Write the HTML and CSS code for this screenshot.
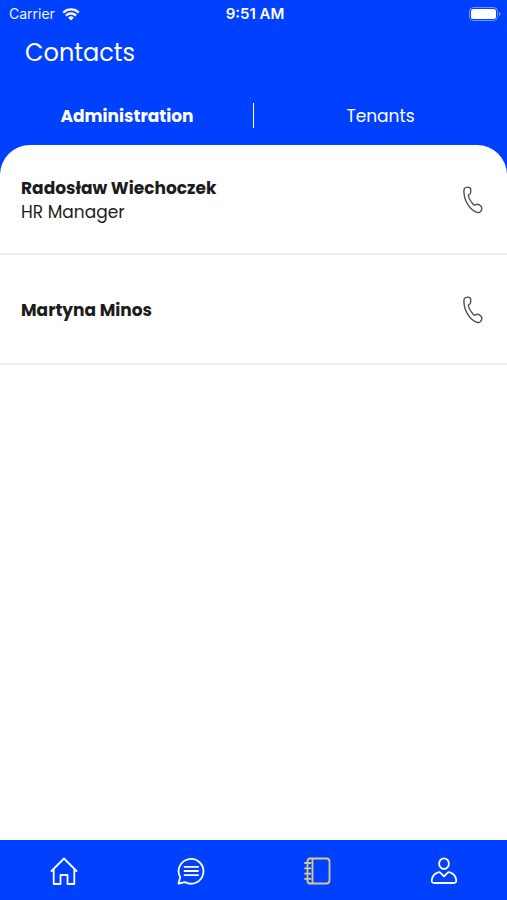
FILE: index.html
```html
<!DOCTYPE html>
<html lang="en">
<head>
<meta charset="utf-8">
<meta name="viewport" content="width=device-width, initial-scale=1">
<title>Contacts</title>
<link rel="stylesheet" href="styles.css">
</head>
<body>
<div class="app">
  <header class="header">
    <div class="status">
      <div class="status-left">
        <span>Carrier</span>
        <svg class="wifi" viewBox="0 0 18 13" width="18" height="13" aria-hidden="true">
          <path d="M1.200 4.600a11.200 11.200 0 0 1 15.600 0M3.900 7.600a7.300 7.300 0 0 1 10.200 0" fill="none" stroke="currentColor" stroke-width="2.300"/>
          <path d="M9 12.600 6.100 9.700a4.100 4.100 0 0 1 5.800 0z" fill="currentColor"/>
        </svg>
      </div>
      <time class="clock">9:51 AM</time>
      <svg class="battery" viewBox="0 0 32 14" width="32" height="14" aria-hidden="true">
        <rect x=".5" y=".5" width="28" height="13" rx="4" fill="none" stroke="#fff" stroke-opacity=".45"/>
        <rect x="2" y="2" width="25" height="10" rx="2.500" fill="#fff"/>
        <path d="M30 5v4q1.500-.6 1.500-2T30 5z" fill="#fff" fill-opacity=".5"/>
      </svg>
    </div>
    <h1 class="title">Contacts</h1>
    <nav class="tabs" aria-label="Contact groups">
      <button class="tab tab-active" type="button">Administration</button>
      <button class="tab" type="button">Tenants</button>
    </nav>
  </header>

  <main class="sheet">
    <ul class="contacts">
      <li class="contact">
        <div class="person">
          <h2 class="name">Radosław Wiechoczek</h2>
          <p class="role">HR Manager</p>
        </div>
        <button class="call" type="button" aria-label="Call Radosław Wiechoczek">
          <svg viewBox="0 0 20 28" width="20" height="28" aria-hidden="true"><path d="M1.200 3Q2 1.100 4.500 1.100q3 0 3.200 2.200l-.1 3.400q-.1 1.300-1.500 1.700-.8.300-.7 1.100.6 4.200 5.300 9.300.7.600 1.400.1 2.300-1.300 4.300-.1 2.200 1.400 2.500 3.400-.2 2.300-1.600 3.600-1.400 1.100-3.300.5C6.500 23.500 1.200 14.800.9 5.700Q.9 4.100 1.200 3z"/></svg>
        </button>
      </li>
      <li class="contact">
        <div class="person">
          <h2 class="name">Martyna Minos</h2>
        </div>
        <button class="call" type="button" aria-label="Call Martyna Minos">
          <svg viewBox="0 0 20 28" width="20" height="28" aria-hidden="true"><path d="M1.200 3Q2 1.100 4.500 1.100q3 0 3.200 2.200l-.1 3.400q-.1 1.300-1.500 1.700-.8.300-.7 1.100.6 4.200 5.300 9.300.7.600 1.400.1 2.300-1.300 4.300-.1 2.200 1.400 2.500 3.400-.2 2.300-1.600 3.600-1.400 1.100-3.300.5C6.500 23.500 1.200 14.800.9 5.700Q.9 4.100 1.200 3z"/></svg>
        </button>
      </li>
    </ul>
  </main>

  <nav class="tabbar" aria-label="Main">
    <a class="item" href="#home" aria-label="Home">
      <svg viewBox="0 0 28 28" width="28" height="28" aria-hidden="true"><path d="M1.500 14 14 1.500 26.500 14M3.700 12v15h6.800v-9h7v9h6.800V12"/></svg>
    </a>
    <a class="item" href="#messages" aria-label="Messages">
      <svg viewBox="0 0 28 28" width="28" height="28" aria-hidden="true"><path d="M1.500 26.500 3.200 20.300A12.400 12.400 0 1 1 8 25.100zM7.500 9.800h13.600M7.500 14h13.600M7.500 18.200h13.600"/></svg>
    </a>
    <a class="item item-active" href="#contacts" aria-label="Contacts" aria-current="page">
      <svg viewBox="0 0 28 28" width="28" height="28" aria-hidden="true"><path d="M7 1.500H23.500q3 0 3 3v19q0 3-3 3H7q-2.500 0-2.500-3v-19q0-3 2.500-3zM9.500 1.500v25M2 6H7.500M2 11.300H7.500M2 16.600H7.500M2 21.900H7.500"/></svg>
    </a>
    <a class="item" href="#profile" aria-label="Profile">
      <svg viewBox="0 0 28 28" width="28" height="28" aria-hidden="true"><ellipse cx="14" cy="6.700" rx="4.900" ry="5.300"/><path d="M8.200 15.300q1.300-.5 2.300.6L14 19.400l3.500-3.500q1-1.100 2.300-.6 5.600 1.900 6.400 7.600.3 3.100-2.400 3.100H4.200q-2.700 0-2.400-3.100.8-5.700 6.400-7.600z"/></svg>
    </a>
  </nav>
</div>
</body>
</html>
```
FILE: styles.css
```css
:root {
  --blue: #0040ff;
  --ink: #1c1c1c;
  --line: #efefef;
}

* {
  box-sizing: border-box;
}

body {
  margin: 0;
  font-family: Poppins, Inter, "Open Sans", sans-serif;
  font-size: 17px;
  line-height: 24px;
  color: var(--ink);
}

h1, h2, p, ul {
  margin: 0;
  padding: 0;
}

button {
  padding: 0;
  border: 0;
  background: none;
  color: inherit;
  font: inherit;
  cursor: pointer;
}

svg {
  display: block;
}

.app {
  display: flex;
  flex-direction: column;
  min-height: 100vh;
  background: var(--blue);
}

.header {
  color: #fff;
}

.status {
  display: grid;
  grid-template-columns: 1fr auto 1fr;
  align-items: center;
  height: 28px;
  padding: 0 6px 0 9px;
  font-family: Inter, sans-serif;
  font-size: 14px;
}

.status-left {
  display: flex;
  align-items: center;
  gap: 7px;
  opacity: .95;
}

.clock {
  font-size: 15px;
  font-weight: 600;
}

.battery {
  justify-self: end;
}

.title {
  padding: 9px 25px 7px;
  font-size: 24px;
  font-weight: 400;
  line-height: 32px;
}

.tabs {
  display: grid;
  grid-template-columns: 1fr 1fr;
  padding: 27px 0 17px 1px;
}

.tab {
  height: 25px;
}

.tab-active {
  border-right: 1px solid #fff;
  font-weight: 700;
}

.sheet {
  flex: 1;
  overflow: hidden;
  border-radius: 30px 30px 0 0;
  background: #fff;
}

.contacts {
  list-style: none;
}

.contact {
  display: flex;
  align-items: center;
  justify-content: space-between;
  height: 110px;
  padding: 2px 24px 0 21px;
  border-bottom: 2px solid var(--line);
}

.name {
  font-size: 17px;
  font-weight: 700;
}

.call svg {
  fill: none;
  stroke: #505050;
  stroke-width: 1.4;
}

.tabbar {
  display: grid;
  grid-template-columns: repeat(4, 1fr);
  height: 60px;
  padding: 2px 0 0 1px;
}

.item {
  display: flex;
  align-items: center;
  justify-content: center;
  color: #fff;
}

.item-active {
  color: #d9cb83;
}

.item svg {
  fill: none;
  stroke: currentColor;
  stroke-width: 1.8;
  stroke-linejoin: round;
  stroke-linecap: round;
}
```
